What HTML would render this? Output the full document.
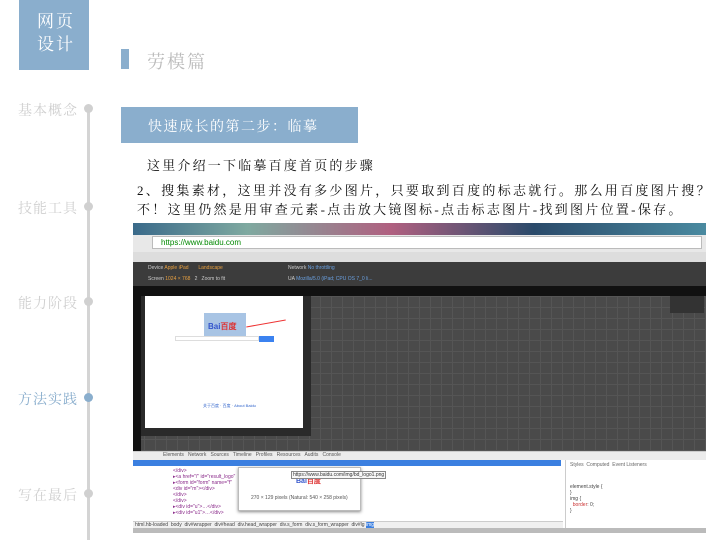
<!DOCTYPE html>
<html><head><meta charset="utf-8"><style>
*{margin:0;padding:0;box-sizing:border-box}
body{width:720px;height:540px;background:#fff;position:relative;overflow:hidden;font-family:"Liberation Serif","Noto Serif CJK SC",serif}
.a{position:absolute}
.nav{font-size:14px;color:#cfcfcf;letter-spacing:1px}
.dot{width:9px;height:9px;border-radius:50%;background:#d0d0d0}
.sm{font-family:"Liberation Sans",sans-serif;font-size:5px;color:#ccc;white-space:nowrap}
</style></head><body>
<div class="a" style="left:19px;top:0;width:70px;height:70px;background:#8aaecd"></div>
<div class="a" style="left:37px;top:10px;color:#fff;font-size:17px;line-height:23px;letter-spacing:2px">网页<br>设计</div>
<div class="a" style="left:121px;top:49px;width:8px;height:20px;background:#8aaecd"></div>
<div class="a" style="left:147px;top:48px;font-size:18px;color:#bbb;letter-spacing:2px">劳模篇</div>
<div class="a" style="left:87px;top:108px;width:3px;height:432px;background:#d4d4d4"></div>
<div class="a nav" style="left:18px;top:100px">基本概念</div><div class="a dot" style="left:84px;top:104px"></div>
<div class="a nav" style="left:18px;top:198px">技能工具</div><div class="a dot" style="left:84px;top:202px"></div>
<div class="a nav" style="left:18px;top:293px">能力阶段</div><div class="a dot" style="left:84px;top:297px"></div>
<div class="a nav" style="left:18px;top:389px;color:#8aaecd">方法实践</div><div class="a dot" style="left:84px;top:393px;background:#8aaecd"></div>
<div class="a nav" style="left:18px;top:485px">写在最后</div><div class="a dot" style="left:84px;top:489px"></div>
<div class="a" style="left:121px;top:107px;width:237px;height:36px;background:#8aaecd"></div>
<div class="a" style="left:148px;top:116px;color:#fff;font-size:14px;letter-spacing:1.5px">快速成长的第二步：临摹</div>
<div class="a" style="left:147px;top:155px;font-size:13px;color:#111;letter-spacing:2.2px">这里介绍一下临摹百度首页的步骤</div>
<div class="a" style="left:137px;top:181px;font-size:13px;color:#111;letter-spacing:2.3px;line-height:19px;white-space:nowrap">2、搜集素材，这里并没有多少图片，只要取到百度的标志就行。那么用百度图片搜？<br>不！这里仍然是用审查元素-点击放大镜图标-点击标志图片-找到图片位置-保存。</div>
<!-- screenshot -->
<div class="a" style="left:133px;top:223px;width:573px;height:310px;background:#444;overflow:hidden">
 <div class="a" style="left:0;top:0;width:573px;height:12px;background:linear-gradient(90deg,#3a6a8a,#7fa9a0 20%,#b06080 45%,#2a4a6a 70%,#4a8aa0)"></div>
 <div class="a" style="left:0;top:12px;width:573px;height:17px;background:#e8e8e8"></div>
 <div class="a" style="left:19px;top:13px;width:550px;height:13px;background:#fff;border:1px solid #bbb;font:8px 'Liberation Sans',sans-serif;color:#080;padding-left:8px;line-height:11px">https://www.baidu.com</div>
 <div class="a" style="left:0;top:29px;width:573px;height:10px;background:#ddd"></div>
 <div class="a" style="left:0;top:39px;width:573px;height:24px;background:#3c3c3c"></div>
 <div class="a sm" style="left:15px;top:42px">Device <span style="color:#e8a040">Apple iPad</span> &nbsp; &nbsp; &nbsp; <span style="color:#e8a040">Landscape</span></div>
 <div class="a sm" style="left:15px;top:53px">Screen <span style="color:#e8a040">1024 × 768</span> &nbsp; 2 &nbsp; Zoom to fit</div>
 <div class="a sm" style="left:155px;top:42px">Network <span style="color:#6aa0e0">No throttling</span></div>
 <div class="a sm" style="left:155px;top:53px">UA <span style="color:#6aa0e0">Mozilla/5.0 (iPad; CPU OS 7_0 li...</span></div>
 <div class="a" style="left:0;top:63px;width:573px;height:10px;background:#111"></div>
 <div class="a" style="left:0;top:73px;width:573px;height:155px;background:#4a4a4a;background-image:linear-gradient(#555 1px,transparent 1px),linear-gradient(90deg,#555 1px,transparent 1px);background-size:11px 11px"></div>
 <div class="a" style="left:0;top:63px;width:8px;height:165px;background:#111"></div>
 <div class="a" style="left:8px;top:73px;width:170px;height:140px;background:#2a2a2a"></div>
 <div class="a" style="left:12px;top:73px;width:158px;height:132px;background:#fff"></div>
 <div class="a" style="left:71px;top:90px;width:42px;height:23px;background:#a8c4e4"></div>
 <div class="a" style="left:75px;top:98px;font:bold 8px 'Liberation Sans',sans-serif;color:#d33"><span style="color:#3355cc">Bai</span>百度</div>
 <div class="a" style="left:113px;top:100px;width:40px;height:1px;background:#e33;transform:rotate(-10deg)"></div>
 <div class="a" style="left:126px;top:113px;width:15px;height:6px;background:#3b82f0"></div>
 <div class="a" style="left:42px;top:113px;width:84px;height:5px;border:1px solid #ddd"></div>
 <div class="a sm" style="left:70px;top:180px;color:#36c;font-size:4px">关于百度 · 百度 · About Baidu</div>
 <div class="a" style="left:537px;top:73px;width:34px;height:17px;background:#333"></div>
 <div class="a" style="left:0;top:228px;width:573px;height:9px;background:#ececec;border-top:1px solid #ccc"></div>
 <div class="a sm" style="left:30px;top:229px;color:#555">Elements &nbsp; Network &nbsp; Sources &nbsp; Timeline &nbsp; Profiles &nbsp; Resources &nbsp; Audits &nbsp; Console</div>
 <div class="a" style="left:0;top:237px;width:573px;height:73px;background:#fff"></div>
 <div class="a" style="left:0;top:237px;width:428px;height:6px;background:#3b7fe0"></div>
 <div class="a" style="left:432px;top:237px;width:1px;height:73px;background:#ccc"></div>
 <div class="a sm" style="left:437px;top:239px;color:#666">Styles &nbsp;Computed &nbsp;Event Listeners</div>
 <div class="a sm" style="left:437px;top:261px;color:#444">element.style {<br>}<br>img {<br>&nbsp; <span style="color:#c33">border</span>: 0;<br>}</div>
 <div class="a sm" style="left:40px;top:245px;color:#8a2a8a;line-height:6px">&lt;/div&gt;<br>▸&lt;a href="/" id="result_logo"<br>▸&lt;form id="form" name="f"<br>&lt;div id="m"&gt;&lt;/div&gt;<br>&lt;/div&gt;<br>&lt;/div&gt;<br>▸&lt;div id="u"&gt;…&lt;/div&gt;<br>▸&lt;div id="u1"&gt;…&lt;/div&gt;</div>
 <div class="a" style="left:105px;top:244px;width:123px;height:44px;background:#fff;border:1px solid #bbb;box-shadow:0 1px 3px #888"></div>
 <div class="a" style="left:163px;top:253px;font:bold 7px 'Liberation Sans',sans-serif;color:#d33"><span style="color:#3355cc">Bai</span>百度</div>
 <div class="a sm" style="left:118px;top:272px;color:#555">270 × 129 pixels (Natural: 540 × 258 pixels)</div>
 <div class="a sm" style="left:158px;top:248px;color:#333;background:#f8f8f8;border:1px solid #888;padding:0 1px">https://www.baidu.com/img/bd_logo1.png</div>
 <div class="a" style="left:0;top:298px;width:430px;height:7px;background:#f0f0f0;border-top:1px solid #ccc"></div>
 <div class="a sm" style="left:2px;top:299px;color:#444">html.hb-loaded &nbsp;body &nbsp;div#wrapper &nbsp;div#head &nbsp;div.head_wrapper &nbsp;div.s_form &nbsp;div.s_form_wrapper &nbsp;div#lg <span style="background:#3b7fe0;color:#fff">img</span></div>
 <div class="a" style="left:0;top:305px;width:573px;height:5px;background:#bbb"></div>
</div>
</body></html>
